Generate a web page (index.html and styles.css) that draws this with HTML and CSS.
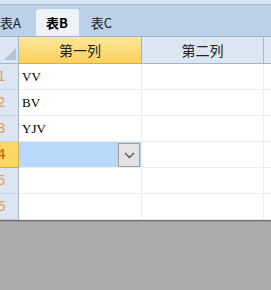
FILE: index.html
```html
<!DOCTYPE html>
<html lang="zh">
<head>
    <meta charset="UTF-8">
    <title>Sheet</title>
    <link rel="stylesheet" href="styles.css">
</head>
<body>
    <div class="top-strip"></div>
    <div class="tabs">
        <div class="tab">表A</div>
        <div class="tab active">表B</div>
        <div class="tab">表C</div>
    </div>
    <div class="sheet">
        <div class="corner"><span class="tri"></span></div>
        <div class="col-head selected">第一列</div>
        <div class="col-head">第二列</div>
        <div class="col-head last"></div>

        <div class="row-head">1</div>
        <div class="cell">VV</div>
        <div class="cell"></div>
        <div class="cell last"></div>

        <div class="row-head">2</div>
        <div class="cell">BV</div>
        <div class="cell"></div>
        <div class="cell last"></div>

        <div class="row-head">3</div>
        <div class="cell">YJV</div>
        <div class="cell"></div>
        <div class="cell last"></div>

        <div class="row-head selected">4</div>
        <div class="cell active">
            <span class="drop">
                <svg width="11" height="7" viewBox="0 0 11 7"><path d="M1 1 L5.5 5.5 L10 1" fill="none" stroke="#555" stroke-width="1.4"/></svg>
            </span>
        </div>
        <div class="cell"></div>
        <div class="cell last"></div>

        <div class="row-head">5</div>
        <div class="cell"></div>
        <div class="cell"></div>
        <div class="cell last"></div>

        <div class="row-head">6</div>
        <div class="cell"></div>
        <div class="cell"></div>
        <div class="cell last"></div>
    </div>
    <div class="footer"></div>
</body>
</html>
```

FILE: styles.css
```css
body {
    margin: 0;
    width: 271px;
    height: 290px;
    overflow: hidden;
    background: #ababab;
    font-family: "Noto Sans CJK SC", sans-serif;
}

.top-strip {
    height: 4px;
    background: #dae5f2;
    border-bottom: 1px solid #a9bfd8;
}

.tabs {
    height: 31px;
    background: #bcd0e7;
    border-bottom: 1px solid #9db4cf;
    display: flex;
    align-items: flex-end;
    margin-left: -10px;
}

.tab {
    font-size: 13px;
    line-height: 27px;
    height: 27px;
    padding: 0 10px;
    color: #1b1b1b;
    margin-right: 2px;
}

.tab:first-child {
    margin-right: 5px;
}

.tab.active {
    background: #eef3fa;
    border-radius: 3px 3px 0 0;
    font-weight: bold;
    padding: 0 11px 0 10px;
    color: #000;
}

.sheet {
    display: grid;
    grid-template-columns: 19px 123px 122px 7px;
    grid-template-rows: 27px repeat(6, 26px);
    background: #fff;
    border-bottom: 1px solid #6c6c6c;
}

.corner {
    background: #dce6f3;
    border-right: 1px solid #9fb6d0;
    border-bottom: 1px solid #9fb6d0;
    position: relative;
}

.tri {
    position: absolute;
    right: 2px;
    bottom: 3px;
    width: 0;
    height: 0;
    border-left: 12px solid transparent;
    border-bottom: 12px solid #b5c3d3;
}

.col-head {
    background: #dce6f3;
    border-right: 1px solid #9fb6d0;
    border-bottom: 1px solid #9fb6d0;
    text-align: center;
    font-size: 14px;
    line-height: 26px;
    color: #222;
}

.col-head.selected {
    background: linear-gradient(#fde79a, #f9d15c);
    border-right-color: #e0a93a;
    border-bottom-color: #e0a93a;
}

.col-head.last {
    border-right: none;
}

.row-head {
    background: #dce6f3;
    border-right: 1px solid #9fb6d0;
    border-bottom: 1px solid #c2d1e3;
    font-family: "DejaVu Sans", sans-serif;
    font-size: 14px;
    line-height: 25px;
    color: #e8a050;
    text-indent: -3px;
}

.row-head.selected {
    background: #fbd765;
    border-right-color: #e0a93a;
    border-bottom-color: #e0a93a;
    color: #d4580c;
}

.cell {
    border-right: 1px solid #ededed;
    border-bottom: 1px solid #ededed;
    font-family: "Liberation Serif", serif;
    font-size: 13px;
    line-height: 25px;
    padding-left: 3px;
    color: #000;
}

.cell.last {
    border-right: none;
}

.cell.active {
    background: #b9d9fa;
    display: flex;
    justify-content: flex-end;
    padding: 1px 1px 1px 0;
}

.drop {
    width: 20px;
    height: 22px;
    background: #e3e3e3;
    border: 1px solid #a0a0a0;
    display: flex;
    align-items: center;
    justify-content: center;
}

.footer {
    height: 70px;
    background: #ababab;
    border-top: 1px solid #9a9a9a;
}
```
